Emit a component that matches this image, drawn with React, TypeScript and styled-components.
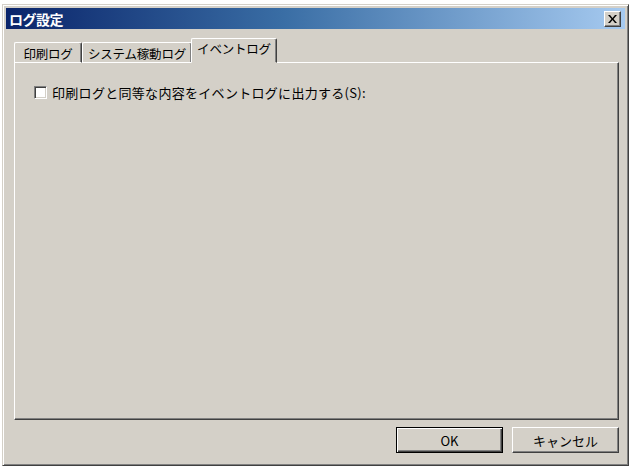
import React from "react";
import styled, { createGlobalStyle } from "styled-components";

const Global = createGlobalStyle`
  html, body { margin: 0; padding: 0; background: #ffffff; }
  body { font-family: "Noto Sans CJK JP", "Liberation Sans", sans-serif; }
`;

const Window = styled.div`
  box-sizing: border-box;
  margin: 4px 0 0 2px;
  width: 627px;
  height: 462px;
  background: #d4d0c8;
  border: 1px solid;
  border-color: #d4d0c8 #404040 #404040 #d4d0c8;
  box-shadow: inset 1px 1px 0 #ffffff, inset -1px -1px 0 #808080;
  padding: 3px;
  display: flex;
  flex-direction: column;
`;

const TitleBar = styled.div`
  height: 21px;
  background: linear-gradient(to right, #0a246a 0%, #3a6ea5 45%, #a6caf0 100%);
  display: flex;
  align-items: center;
  justify-content: space-between;
  padding: 0 4px 0 3px;
`;

const Title = styled.span`
  color: #ffffff;
  font-weight: bold;
  font-size: 14px;
  letter-spacing: -0.5px;
`;

const CloseButton = styled.div`
  box-sizing: border-box;
  width: 17px;
  height: 16px;
  background: #d4d0c8;
  border: 1px solid;
  border-color: #ffffff #404040 #404040 #ffffff;
  box-shadow: inset -1px -1px 0 #808080;
  display: flex;
  align-items: center;
  justify-content: center;
`;

const Body = styled.div`
  flex: 1;
  display: flex;
  flex-direction: column;
  padding: 9px 6px 0 8px;
`;

const TabStrip = styled.div`
  display: flex;
  align-items: flex-end;
  height: 25px;
  position: relative;
  z-index: 1;
  margin-bottom: -1px;
`;

const Tab = styled.div<{ $active?: boolean; $w: number }>`
  box-sizing: border-box;
  width: ${(p) => p.$w}px;
  height: ${(p) => (p.$active ? 25 : 21)}px;
  padding-top: ${(p) => (p.$active ? 1 : 2)}px;
  margin: ${(p) => (p.$active ? "0 -2px 0 -1px" : "0")};
  background: #d4d0c8;
  border-top: 1px solid #ffffff;
  border-left: 1px solid #ffffff;
  border-right: 1px solid #404040;
  box-shadow: inset -1px 0 0 #808080;
  border-radius: 2px 2px 0 0;
  font-size: 12.5px;
  letter-spacing: -0.2px;
  line-height: 17px;
  text-align: center;
  color: #000;
  white-space: nowrap;
  ${(p) =>
    p.$active
      ? "border-bottom: 1px solid #d4d0c8; z-index: 2; position: relative;"
      : "border-bottom: 1px solid #ffffff;"}
`;

const Panel = styled.div`
  box-sizing: border-box;
  height: 358px;
  border: 1px solid;
  border-color: #ffffff #404040 #404040 #ffffff;
  box-shadow: inset -1px -1px 0 #808080;
  padding: 20px 0 0 19px;
`;

const CheckRow = styled.label`
  display: flex;
  align-items: center;
  gap: 5px;
  font-size: 13px;
  letter-spacing: 0.3px;
  color: #000;
`;

const CheckBox = styled.span`
  box-sizing: border-box;
  width: 13px;
  height: 13px;
  background: #ffffff;
  border: 1px solid;
  border-color: #808080 #ffffff #ffffff #808080;
  box-shadow: inset 1px 1px 0 #404040, inset -1px -1px 0 #d4d0c8;
  flex: none;
`;

const ButtonRow = styled.div`
  display: flex;
  justify-content: flex-end;
  gap: 9px;
  padding: 7px 0 0 0;
`;

const Button = styled.div<{ $default?: boolean }>`
  box-sizing: border-box;
  width: 107px;
  height: 26px;
  background: #d4d0c8;
  border: 1px solid;
  border-color: ${(p) => (p.$default ? "#000000" : "#ffffff #404040 #404040 #ffffff")};
  box-shadow: ${(p) =>
    p.$default
      ? "inset 1px 1px 0 #ffffff, inset -1px -1px 0 #404040, inset -2px -2px 0 #808080"
      : "inset -1px -1px 0 #808080"};
  display: flex;
  align-items: center;
  justify-content: center;
  font-size: 13px;
  color: #000;
`;

export default function App() {
  return (
    <>
      <Global />
      <Window>
        <TitleBar>
          <Title>ログ設定</Title>
          <CloseButton>
            <svg width="9" height="8" viewBox="0 0 9 8">
              <path d="M0 0h2l2.5 3 2.5-3h2L5.5 4 9 8H7L4.5 5 2 8H0l3.5-4z" fill="#000" />
            </svg>
          </CloseButton>
        </TitleBar>
        <Body>
          <TabStrip>
            <Tab $w={68}>印刷ログ</Tab>
            <Tab $w={110}>システム稼動ログ</Tab>
            <Tab $w={86} $active>
              イベントログ
            </Tab>
          </TabStrip>
          <Panel>
            <CheckRow>
              <CheckBox />
              印刷ログと同等な内容をイベントログに出力する(S):
            </CheckRow>
          </Panel>
          <ButtonRow>
            <Button $default>OK</Button>
            <Button>キャンセル</Button>
          </ButtonRow>
        </Body>
      </Window>
    </>
  );
}
